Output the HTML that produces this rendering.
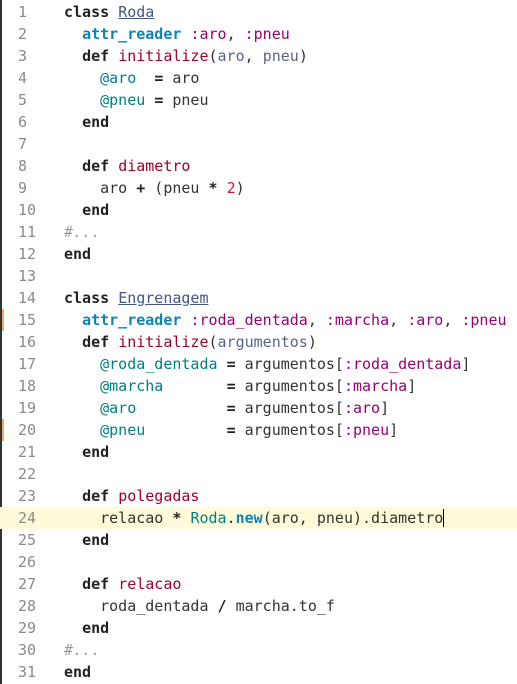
<!DOCTYPE html>
<html><head><style>
body{margin:0;background:#fff;width:517px;height:684px;overflow:hidden;position:relative;font-family:"DejaVu Sans Mono","Liberation Mono",monospace;font-size:15px;}
.bl{position:absolute;left:0;top:0;width:2px;height:684px;background:#333;}
.ln{position:absolute;left:0;width:517px;height:22px;line-height:22px;white-space:pre;margin-top:1px;}
.n{position:absolute;left:18px;color:#8a8a8a;}
.c{position:absolute;left:64px;color:#333;}
.hl{background:#fdfbd8;}
.k{font-weight:bold;color:#222}
.cn{color:#445588;text-decoration:underline}
.a{color:#0e84b5;font-weight:bold}
.s{color:#990073}
.f{color:#a0002a}
.p{color:#5a6390}
.i{color:#008080}
.num{color:#d01040}
.cm{color:#999;font-style:italic}
.mk{position:absolute;left:2px;width:2px;height:22px;background:#f0a860;}
.cur{display:inline-block;width:1px;height:18px;background:#000;vertical-align:-4px;}
</style></head><body>
<div class="bl"></div>
<div class="ln" style="top:0"><span class="n">1</span><span class="c"><span class="k">class</span> <span class="cn">Roda</span></span></div>
<div class="ln" style="top:22px"><span class="n">2</span><span class="c">  <span class="a">attr_reader</span> <span class="s">:aro</span>, <span class="s">:pneu</span></span></div>
<div class="ln" style="top:44px"><span class="n">3</span><span class="c">  <span class="k">def</span> <span class="f">initialize</span>(<span class="p">aro</span>, <span class="p">pneu</span>)</span></div>
<div class="ln" style="top:66px"><span class="n">4</span><span class="c">    <span class="i">@aro</span>  <span class="k">=</span> aro</span></div>
<div class="ln" style="top:88px"><span class="n">5</span><span class="c">    <span class="i">@pneu</span> <span class="k">=</span> pneu</span></div>
<div class="ln" style="top:110px"><span class="n">6</span><span class="c">  <span class="k">end</span></span></div>
<div class="ln" style="top:132px"><span class="n">7</span></div>
<div class="ln" style="top:154px"><span class="n">8</span><span class="c">  <span class="k">def</span> <span class="f">diametro</span></span></div>
<div class="ln" style="top:176px"><span class="n">9</span><span class="c">    aro <span class="k">+</span> (pneu <span class="k">*</span> <span class="num">2</span>)</span></div>
<div class="ln" style="top:198px"><span class="n">10</span><span class="c">  <span class="k">end</span></span></div>
<div class="ln" style="top:220px"><span class="n">11</span><span class="c"><span class="cm">#...</span></span></div>
<div class="ln" style="top:242px"><span class="n">12</span><span class="c"><span class="k">end</span></span></div>
<div class="ln" style="top:264px"><span class="n">13</span></div>
<div class="ln" style="top:286px"><span class="n">14</span><span class="c"><span class="k">class</span> <span class="cn">Engrenagem</span></span></div>
<div class="ln" style="top:308px"><div class="mk"></div><span class="n">15</span><span class="c">  <span class="a">attr_reader</span> <span class="s">:roda_dentada</span>, <span class="s">:marcha</span>, <span class="s">:aro</span>, <span class="s">:pneu</span></span></div>
<div class="ln" style="top:330px"><span class="n">16</span><span class="c">  <span class="k">def</span> <span class="f">initialize</span>(<span class="p">argumentos</span>)</span></div>
<div class="ln" style="top:352px"><span class="n">17</span><span class="c">    <span class="i">@roda_dentada</span> <span class="k">=</span> argumentos[<span class="s">:roda_dentada</span>]</span></div>
<div class="ln" style="top:374px"><span class="n">18</span><span class="c">    <span class="i">@marcha</span>       <span class="k">=</span> argumentos[<span class="s">:marcha</span>]</span></div>
<div class="ln" style="top:396px"><span class="n">19</span><span class="c">    <span class="i">@aro</span>          <span class="k">=</span> argumentos[<span class="s">:aro</span>]</span></div>
<div class="ln" style="top:418px"><div class="mk"></div><span class="n">20</span><span class="c">    <span class="i">@pneu</span>         <span class="k">=</span> argumentos[<span class="s">:pneu</span>]</span></div>
<div class="ln" style="top:440px"><span class="n">21</span><span class="c">  <span class="k">end</span></span></div>
<div class="ln" style="top:462px"><span class="n">22</span></div>
<div class="ln" style="top:484px"><span class="n">23</span><span class="c">  <span class="k">def</span> <span class="f">polegadas</span></span></div>
<div class="ln hl" style="top:506px"><span class="n">24</span><span class="c">    relacao <span class="k">*</span> <span class="i">Roda</span>.<span class="a">new</span>(aro, pneu).diametro<span class="cur"></span></span></div>
<div class="ln" style="top:528px"><span class="n">25</span><span class="c">  <span class="k">end</span></span></div>
<div class="ln" style="top:550px"><span class="n">26</span></div>
<div class="ln" style="top:572px"><span class="n">27</span><span class="c">  <span class="k">def</span> <span class="f">relacao</span></span></div>
<div class="ln" style="top:594px"><span class="n">28</span><span class="c">    roda_dentada <span class="k">/</span> marcha.to_f</span></div>
<div class="ln" style="top:616px"><span class="n">29</span><span class="c">  <span class="k">end</span></span></div>
<div class="ln" style="top:638px"><span class="n">30</span><span class="c"><span class="cm">#...</span></span></div>
<div class="ln" style="top:660px"><span class="n">31</span><span class="c"><span class="k">end</span></span></div>
</body></html>
